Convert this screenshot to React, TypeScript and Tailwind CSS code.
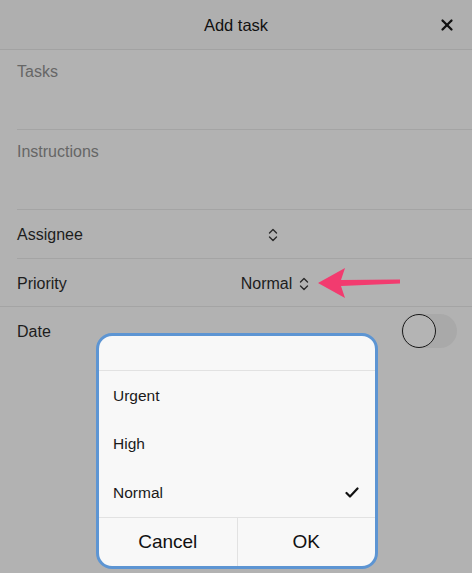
import { X } from 'lucide-react'

// Small up/down chevron used by the picker rows
function UpDown() {
  return (
    <svg width="10" height="14" viewBox="0 0 10 14" fill="none" stroke="#2a2a2a" strokeWidth="1.4" strokeLinecap="round" strokeLinejoin="round">
      <path d="M1.5 5 L5 1.5 L8.5 5" />
      <path d="M1.5 9 L5 12.5 L8.5 9" />
    </svg>
  )
}

function Arrow() {
  return (
    <svg width="90" height="34" viewBox="0 0 90 34" className="absolute left-[314px] top-[266px]">
      <path d="M4 17 L31 2 L27 14 L86 13.5 L86 17.5 L27 20 L31 32 Z" fill="#f23b6f" />
    </svg>
  )
}

export default function App() {
  const options = ['Urgent', 'High', 'Normal']
  const selected = 'Normal'

  return (
    <div className="relative w-[472px] h-[573px] overflow-hidden bg-[#b2b2b2] font-['Liberation_Sans',Arial,sans-serif]">
      {/* Header */}
      <div className="relative flex h-[50px] items-center justify-center border-b border-[#a2a2a2] bg-[#afafaf]">
        <span className="text-[16.5px] text-[#111] pt-[2px]">Add task</span>
        <X className="absolute right-[16px] top-[16px] text-[#111]" size={18} strokeWidth={3} />
      </div>

      {/* Text inputs */}
      <div className="h-[80px] ml-[17px] border-b border-[#a4a4a4] pt-[10px] text-[16px] text-[#666]">Tasks</div>
      <div className="h-[80px] ml-[17px] border-b border-[#a4a4a4] pt-[10px] text-[16px] text-[#666]">Instructions</div>

      <div className="flex h-[49px] items-center ml-[17px] pt-[2px] border-b border-[#a4a4a4]">
        <div className="w-[183px] text-[16px] text-[#1d1d1d]">Assignee</div>
        <div className="w-[146px] flex items-center justify-center">
          <UpDown />
        </div>
      </div>
      <div className="flex h-[48px] items-center pl-[17px] pt-[3px] border-b border-[#a4a4a4]">
        <div className="w-[185px] text-[16px] text-[#1d1d1d]">Priority</div>
        <div className="w-[146px] flex items-center justify-center gap-[7px] text-[16px] text-[#1d1d1d]">
          <span>Normal</span>
          <UpDown />
        </div>
      </div>

      {/* Date row with switch */}
      <div className="flex h-[48px] items-center justify-between pl-[17px] pr-[15px]">
        <span className="text-[16px] text-[#1d1d1d] pt-[2px]">Date</span>
        <div className="relative h-[34px] w-[56px] rounded-full bg-[#a9a9a9]">
          <div className="absolute left-[1px] top-0 h-[34px] w-[34px] rounded-full border-[1.5px] border-[#1a1a1a] bg-[#b4b4b4]" />
        </div>
      </div>

      <Arrow />

      {/* Priority picker dialog */}
      <div className="absolute left-[96px] top-[333px] w-[282px] h-[236px] rounded-[16px] border-[3px] border-[#5d95d3] bg-[#f8f8f8] flex flex-col overflow-hidden">
        <div className="h-[35px] border-b border-[#e2e2e2]" />
        <div className="flex flex-col border-b border-[#e2e2e2]">
          {options.map((o) => (
            <div key={o} className="flex h-[48.5px] items-center justify-between pl-[14px] pr-[16px] text-[15.5px] text-[#1a1a1a]">
              <span>{o}</span>
              {o === selected && (
                <svg width="14" height="11" viewBox="0 0 14 11" fill="none" stroke="#111" strokeWidth="2.2" strokeLinecap="round" strokeLinejoin="round">
                  <path d="M1.5 6 L5 9.5 L12.5 1.5" />
                </svg>
              )}
            </div>
          ))}
        </div>
        <div className="flex flex-1">
          <button className="flex-1 flex items-center justify-center border-r border-[#e2e2e2] text-[19px] text-[#111]">Cancel</button>
          <button className="flex-1 flex items-center justify-center text-[19px] text-[#111]">OK</button>
        </div>
      </div>
    </div>
  )
}
